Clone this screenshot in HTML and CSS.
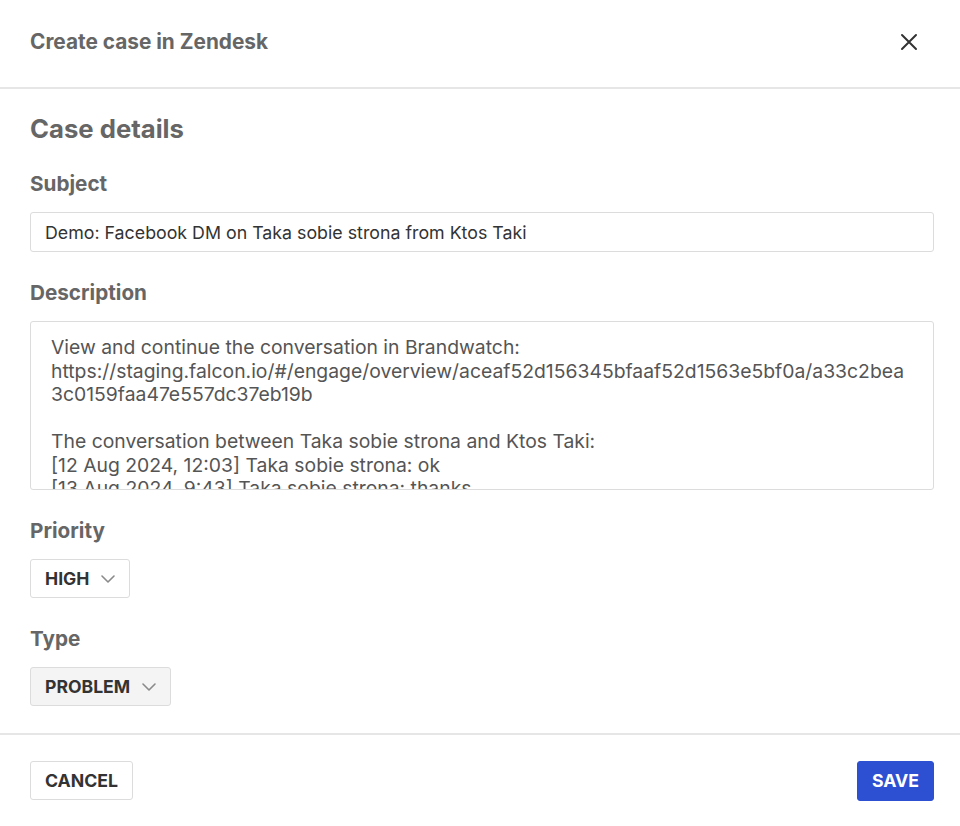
FILE: index.html
```html
<!DOCTYPE html>
<html lang="en">
<head>
<meta charset="utf-8">
<title>Create case in Zendesk</title>
<link rel="stylesheet" href="styles.css">
</head>
<body>
<div class="modal">
  <header class="modal-header">
    <h1 class="modal-title">Create case in Zendesk</h1>
    <button class="close-btn" aria-label="Close">
      <svg width="18" height="18" viewBox="0 0 18 18"><path d="M2 2 L16 16 M16 2 L2 16" stroke="#333" stroke-width="2" stroke-linecap="round" fill="none"/></svg>
    </button>
  </header>
  <main class="modal-body">
    <h2 class="section-title">Case details</h2>
    <div class="field">
      <label class="field-label">Subject</label>
      <div class="text-input">Demo: Facebook DM on Taka sobie strona from Ktos Taki</div>
    </div>
    <div class="field">
      <label class="field-label">Description</label>
      <div class="textarea">
        <div class="line">View and continue the conversation in Brandwatch:</div>
        <div class="line">https://staging.falcon.io/#/engage/overview/aceaf52d156345bfaaf52d1563e5bf0a/a33c2bea</div>
        <div class="line">3c0159faa47e557dc37eb19b</div>
        <div class="line">&nbsp;</div>
        <div class="line">The conversation between Taka sobie strona and Ktos Taki:</div>
        <div class="line">[12 Aug 2024, 12:03] Taka sobie strona: ok</div>
        <div class="line">[13 Aug 2024, 9:43] Taka sobie strona: thanks</div>
      </div>
    </div>
    <div class="field">
      <label class="field-label">Priority</label>
      <div class="select">HIGH
        <svg class="chev" width="14" height="8" viewBox="0 0 14 8"><path d="M1 1 L7 7 L13 1" stroke="#8a8a8a" stroke-width="1.6" fill="none" stroke-linecap="round" stroke-linejoin="round"/></svg>
      </div>
    </div>
    <div class="field">
      <label class="field-label">Type</label>
      <div class="select select-filled">PROBLEM
        <svg class="chev" width="14" height="8" viewBox="0 0 14 8"><path d="M1 1 L7 7 L13 1" stroke="#8a8a8a" stroke-width="1.6" fill="none" stroke-linecap="round" stroke-linejoin="round"/></svg>
      </div>
    </div>
  </main>
  <footer class="modal-footer">
    <button class="btn btn-secondary">CANCEL</button>
    <button class="btn btn-primary">SAVE</button>
  </footer>
</div>
</body>
</html>
```
FILE: styles.css
```css
* { box-sizing: border-box; }
html, body { margin: 0; padding: 0; background: #fff; }
body { font-family: Inter, "Liberation Sans", sans-serif; color: #333; }
.modal { width: 960px; height: 826px; display: flex; flex-direction: column; overflow: hidden; }
.modal-header {
  height: 89px; flex: none; display: flex; align-items: center; justify-content: space-between;
  padding: 0 42px 4px 30px; border-bottom: 2px solid #e6e6e6;
}
.modal-title { margin: 0; font-size: 20.8px; font-weight: 700; color: #666; line-height: 26px; }
.close-btn { border: 0; background: none; padding: 0; width: 18px; height: 18px; display: flex; }
.modal-body { padding: 25px 26px 0 30px; flex: 1; min-height: 0; }
.section-title { margin: 0 0 28px; font-size: 25.7px; font-weight: 700; color: #666; line-height: 30px; }
.field { margin-bottom: 29px; }
.field:last-child { margin-bottom: 0; }
.field-label { display: block; font-size: 20.7px; font-weight: 700; color: #666; line-height: 24px; margin-bottom: 16px; }
.text-input {
  height: 40px; border: 1px solid #dcdcdc; border-radius: 3px; padding: 0 14px;
  display: flex; align-items: center; font-size: 17.8px; color: #333;
}
.textarea {
  height: 169px; border: 1px solid #dcdcdc; border-radius: 3px; padding: 14px 20px;
  overflow: hidden; font-size: 19.35px; line-height: 23.5px; color: #555;
}
.line { white-space: nowrap; }
.select {
  display: inline-flex; align-items: center; gap: 12px; height: 39px;
  border: 1px solid #dcdcdc; border-radius: 3px; padding: 0 14px;
  font-size: 17.6px; font-weight: 700; color: #333;
}
.select-filled { background: #f4f4f4; }
.chev { display: block; }
.modal-footer {
  height: 93px; flex: none; border-top: 2px solid #e6e6e6; display: flex; align-items: center;
  justify-content: space-between; padding: 0 26px 0 30px;
}
.btn { font-family: Inter, "Liberation Sans", sans-serif; font-weight: 700; font-size: 17.7px; border-radius: 3px; cursor: pointer; }
.btn-secondary { height: 39px; padding: 0 14px; background: #fff; border: 1px solid #dcdcdc; color: #333; }
.btn-primary { height: 40px; padding: 0 14px; background: #2d4fd1; border: 1px solid #2d4fd1; color: #fff; }
```
